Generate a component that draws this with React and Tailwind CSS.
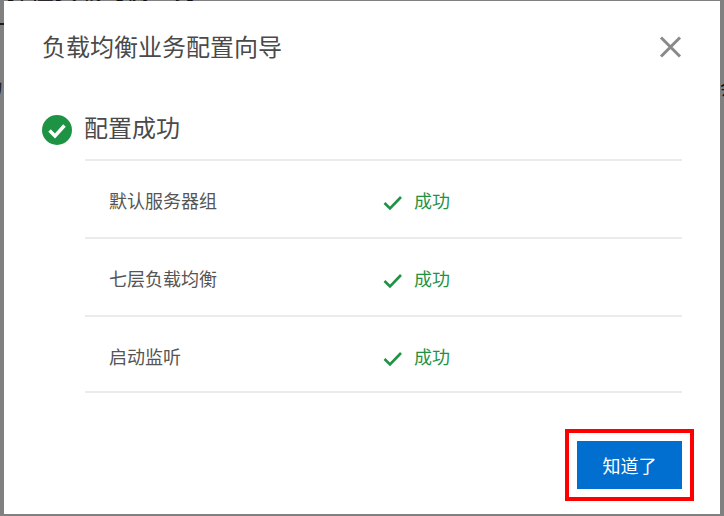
import React from 'react';

const FONT = "font-['Microsoft_YaHei','Noto_Sans_CJK_SC','Noto_Sans',sans-serif]";

const pasos = ['默认服务器组', '七层负载均衡', '启动监听'];

const Check = () => (
  <svg width="20" height="16" viewBox="0 0 20 16" fill="none" className="shrink-0 mt-[6px]">
    <path d="M1.5 8 L7 13.5 L18 2" stroke="#1f9344" strokeWidth="2.6" />
  </svg>
);

const App = () => {
  return (
    <div className={`relative w-[724px] h-[516px] overflow-hidden bg-[#808080] ${FONT}`}>
      {/* page showing through behind the overlay */}
      <div className="absolute left-[6px] top-[-23px] text-[24px] leading-[24px] whitespace-nowrap text-[#111111]">弹性负载均衡业务</div>
      <div className="absolute left-0 top-[23px] w-[4px] h-[2px] bg-[#1c1c1c]" />
      <div className="absolute left-[-15px] top-[74px] text-[18px] leading-[24px] text-[#222222]">力</div>
      <div className="absolute left-[720px] top-[75px] text-[18px] leading-[24px] text-[#111111]">会</div>

      <div className="absolute left-[4px] top-[1px] w-[716px] h-[513px] bg-white flex flex-col px-[38px]">
        {/* Header */}
        <div className="flex items-center justify-between h-[94px] pb-[4px]">
          <h1 className="text-[24px] leading-[32px] font-normal text-[#4a4a4a]">负载均衡业务配置向导</h1>
          <svg width="24" height="24" viewBox="0 0 24 24" fill="none">
            <path d="M3 3.5 L22 22.5 M22 3.5 L3 22.5" stroke="#8a8a8a" strokeWidth="3" />
          </svg>
        </div>

        {/* Result */}
        <div className="flex items-center h-[64px] pt-[10px] pb-[4px]">
          <svg width="30" height="30" viewBox="0 0 30 30" className="shrink-0">
            <circle cx="15" cy="15" r="15" fill="#1f9344" />
            <path d="M7.5 15.5 L13 21 L22.5 10.5" stroke="white" strokeWidth="3.4" fill="none" />
          </svg>
          <span className="ml-[12px] mb-[6px] text-[24px] leading-[32px] text-[#4a4a4a]">配置成功</span>
        </div>

        <div className="ml-[43px] flex flex-col border-t-2 border-[#ebebeb]">
          {pasos.map((paso, i) => (
            <div
              key={paso}
              className={`flex items-center border-b-2 border-[#ebebeb] pl-[24px] ${i === 2 ? 'h-[76px] pt-[4px]' : 'h-[78px] pt-[2px]'}`}
            >
              <span className="w-[274px] text-[18px] leading-[24px] text-[#555555]">{paso}</span>
              <Check />
              <span className="ml-[11px] text-[18px] leading-[24px] text-[#1f9344]">成功</span>
            </div>
          ))}
        </div>

        {/* Footer */}
        <div className="flex justify-end mt-[36px] mr-[-12px]">
          <div className="border-[4px] border-[#ff0000] p-[8px]">
            <button className="block w-[105px] h-[48px] bg-[#006fcf] text-white text-[18px]">知道了</button>
          </div>
        </div>
      </div>
    </div>
  );
};

export default App;
